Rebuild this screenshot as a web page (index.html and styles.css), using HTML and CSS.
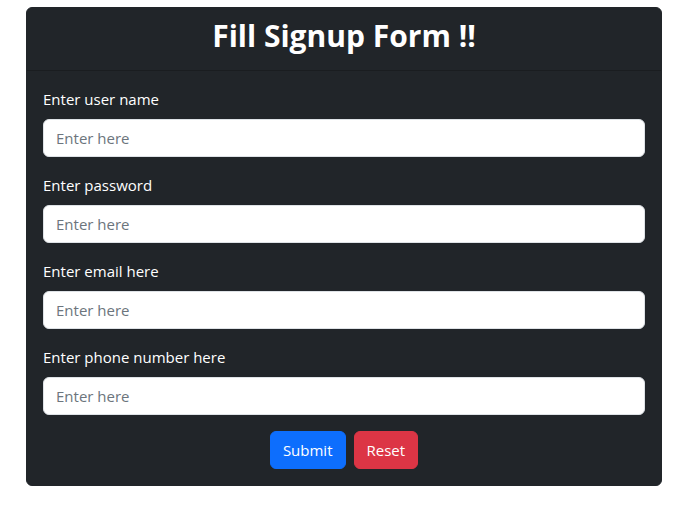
FILE: index.html
```html
<!DOCTYPE html>
<html lang="en">
<head>
<meta charset="utf-8">
<title>Signup</title>
<link rel="stylesheet" href="styles.css">
</head>
<body>
<div class="card">
  <div class="card-header">
    <h1 class="title">Fill Signup Form !!</h1>
  </div>
  <form class="card-body">
    <div class="field">
      <label class="label" for="u">Enter user name</label>
      <input class="input" id="u" type="text" placeholder="Enter here">
    </div>
    <div class="field">
      <label class="label" for="p">Enter password</label>
      <input class="input" id="p" type="password" placeholder="Enter here">
    </div>
    <div class="field">
      <label class="label" for="e">Enter email here</label>
      <input class="input" id="e" type="email" placeholder="Enter here">
    </div>
    <div class="field">
      <label class="label" for="ph">Enter phone number here</label>
      <input class="input" id="ph" type="text" placeholder="Enter here">
    </div>
    <div class="actions">
      <button type="submit" class="btn btn-primary">Submit</button>
      <button type="reset" class="btn btn-danger">Reset</button>
    </div>
  </form>
</div>
</body>
</html>
```
FILE: styles.css
```css
* { box-sizing: border-box; }
html, body { margin: 0; padding: 0; background: #fff; }
body {
  font-family: "Open Sans", "Noto Sans", sans-serif;
  font-size: 15px;
  line-height: 24px;
  color: #fff;
  padding-top: 7px;
}
.card {
  width: 636px;
  margin: 0 0 0 26px;
  background: #212529;
  border: 1px solid #212529;
  border-radius: 6px;
}
.card-header {
  padding: 9px 16px 8px;
  border-bottom: 1px solid #1a1d20;
  text-align: center;
}
.title {
  margin: 0 0 7px;
  font-size: 30px;
  font-weight: 700;
  line-height: 38px;
  color: #fff;
}
.card-body {
  padding: 16px 16px 16px;
  display: flex;
  flex-direction: column;
}
.field {
  display: flex;
  flex-direction: column;
  margin-bottom: 16px;
}
.label {
  display: block;
  margin-bottom: 8px;
  line-height: 24px;
}
.input {
  display: block;
  width: 100%;
  height: 38px;
  padding: 6px 12px;
  font-family: inherit;
  font-size: 15px;
  color: #212529;
  background: #fff;
  border: 1px solid #dee2e6;
  border-radius: 6px;
  outline: none;
}
.input::placeholder { color: #6c757d; opacity: 1; }
.actions {
  display: flex;
  justify-content: center;
  gap: 8px;
}
.btn {
  height: 38px;
  padding: 6px 12px;
  font-family: inherit;
  font-size: 15px;
  line-height: 24px;
  color: #fff;
  border: 1px solid transparent;
  border-radius: 6px;
  cursor: pointer;
}
.btn-primary { background: #0d6efd; border-color: #0d6efd; }
.btn-danger { background: #dc3545; border-color: #dc3545; }
```
